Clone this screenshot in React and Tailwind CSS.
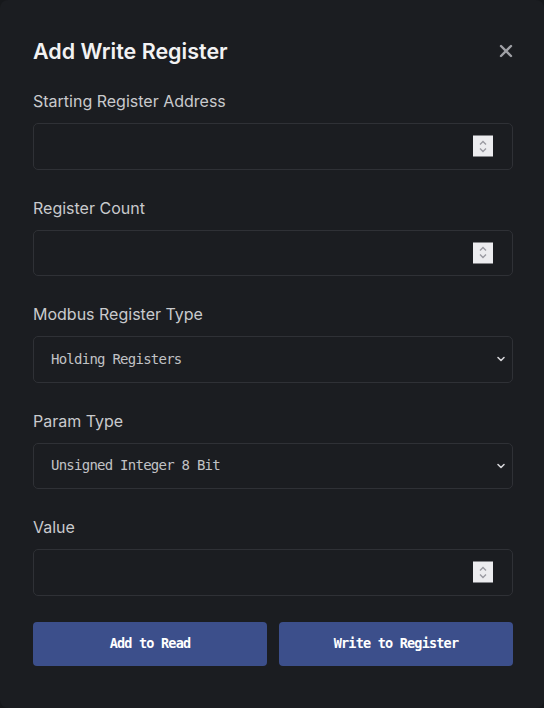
import { useState } from 'react'

const mono = { fontFamily: '"DejaVu Sans Mono", "Liberation Mono", monospace' }

const Chevron = () => (
  <svg className="pointer-events-none absolute right-[6px] top-1/2 -translate-y-1/2" width="12" height="12" viewBox="0 0 12 12">
    <path d="M3 4.5 L6 7.5 L9 4.5" fill="none" stroke="#d4d4d8" strokeWidth="1.6" strokeLinecap="round" strokeLinejoin="round" />
  </svg>
)

const Spinner = () => (
  <div className="pointer-events-none absolute right-[20px] top-1/2 flex h-[21px] w-[20px] -translate-y-1/2 flex-col items-center justify-center bg-[#ececef]">
    <svg width="12" height="16" viewBox="0 0 12 16">
      <path d="M3 6 L6 3 L9 6" fill="none" stroke="#9a9aa2" strokeWidth="1.4" />
      <path d="M3 10 L6 13 L9 10" fill="none" stroke="#9a9aa2" strokeWidth="1.4" />
    </svg>
  </div>
)

const fieldCls =
  'h-[46.5px] w-full rounded-[5px] border border-[#2f3136] bg-[#1b1d21] px-[17px] text-[14px] tracking-[-0.75px] text-[#c1c2c5] outline-none'

const NumberField = ({ label, value, onChange }) => (
  <div className="mb-[26px]">
    <label className="mb-[10px] block text-base leading-6 text-[#c9cacd]">{label}</label>
    <div className="relative">
      <input
        type="text"
        inputMode="numeric"
        value={value}
        onChange={(e) => onChange(e.target.value)}
        className={fieldCls}
        style={mono}
      />
      <Spinner />
    </div>
  </div>
)

const SelectField = ({ label, value, options, onChange }) => (
  <div className="mb-[26px]">
    <label className="mb-[10px] block text-base leading-6 text-[#c9cacd]">{label}</label>
    <div className="relative">
      <select value={value} onChange={(e) => onChange(e.target.value)} className={`${fieldCls} appearance-none`} style={mono}>
        {options.map((o) => (
          <option key={o}>{o}</option>
        ))}
      </select>
      <Chevron />
    </div>
  </div>
)

export default function App() {
  const [start, setStart] = useState('')
  const [count, setCount] = useState('')
  const [regType, setRegType] = useState('Holding Registers')
  const [paramType, setParamType] = useState('Unsigned Integer 8 Bit')
  const [val, setVal] = useState('')

  return (
    <div className="h-[708px] w-[544px] bg-[#16181b]" style={{ fontFamily: 'Inter, "Noto Sans", sans-serif' }}>
      <div className="h-full w-full rounded-[8px] bg-[#1b1d21] pl-[33px] pr-[31px] pt-[37px]">
        <div className="mb-[24px] flex items-center justify-between">
          <h2 className="text-[21.5px] font-semibold leading-[28px] text-[#f2f2f3]">Add Write Register</h2>
          <button className="mr-[-5px] flex h-[24px] w-[24px] items-center justify-center text-[#a0a1a6]">
            <svg width="14" height="14" viewBox="0 0 14 14">
              <path d="M2 2 L12 12 M12 2 L2 12" stroke="currentColor" strokeWidth="2.4" strokeLinecap="round" />
            </svg>
          </button>
        </div>

        <NumberField label="Starting Register Address" value={start} onChange={setStart} />
        <NumberField label="Register Count" value={count} onChange={setCount} />
        <SelectField
          label="Modbus Register Type"
          value={regType}
          onChange={setRegType}
          options={['Holding Registers', 'Input Registers', 'Coils', 'Discrete Inputs']}
        />
        <SelectField
          label="Param Type"
          value={paramType}
          onChange={setParamType}
          options={['Unsigned Integer 8 Bit', 'Unsigned Integer 16 Bit', 'Signed Integer 16 Bit', 'Float 32 Bit']}
        />
        <NumberField label="Value" value={val} onChange={setVal} />

        <div className="flex gap-[12px]">
          <button className="h-[44px] flex-1 rounded-[4px] bg-[#3c4f8b] text-[13.5px] font-bold tracking-[-0.8px] text-white" style={mono}>
            Add to Read
          </button>
          <button className="h-[44px] flex-1 rounded-[4px] bg-[#3c4f8b] text-[13.5px] font-bold tracking-[-0.8px] text-white" style={mono}>
            Write to Register
          </button>
        </div>
      </div>
    </div>
  )
}
